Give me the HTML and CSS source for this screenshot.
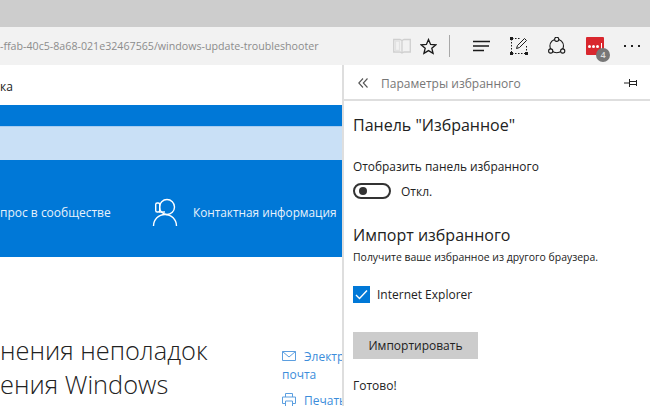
FILE: index.html
```html
<!DOCTYPE html>
<html lang="ru">
<head>
<meta charset="utf-8">
<title>Параметры избранного</title>
<link rel="stylesheet" href="styles.css">
</head>
<body>
<div class="titlebar"></div>
<header class="toolbar">
  <div class="url">-ffab-40c5-8a68-021e32467565/windows-update-troubleshooter</div>
  <div class="tools">
    <svg class="ic-book" width="18" height="16" viewBox="0 0 18 16" fill="none" stroke="#cfcfcf" stroke-width="1.300"><path d="M.7 1.500h6.300l2 1 2-1h6.300v12.500h-6.300l-2 1-2-1H.7zM9 2.500v12"/><path d="M2.500 3h4v9.500h-4z" stroke="#e2e2e2"/></svg>
    <svg class="ic-star" width="17" height="17" viewBox="0 0 17 17" fill="none" stroke="#1a1a1a" stroke-width="1.300"><path d="M8.500 1.500l2.100 4.900 5.300.4-4.100 3.400 1.300 5.200-4.600-2.800-4.600 2.800 1.300-5.200L1.100 6.800l5.300-.4z"/></svg>
    <span class="sep"></span>
    <svg class="ic-hub" width="18" height="12" viewBox="0 0 18 12" stroke="#1a1a1a" stroke-width="1.300"><path d="M0 1.500h17M0 6h16M0 10.500h11"/></svg>
    <svg class="ic-note" width="18" height="18" viewBox="0 0 18 18" fill="none" stroke="#1a1a1a"><path d="M2 1.500h8M2 16.500h14M1.500 2v14M16.500 9v7" stroke-dasharray="1.500 1.500"/><path d="M6.500 11.500l1-3 7-7 2 2-7 7z"/><g fill="#1a1a1a" stroke="none"><rect x="0" y="0" width="3" height="3"/><rect x="0" y="15" width="3" height="3"/><rect x="15" y="15" width="3" height="3"/></g></svg>
    <svg class="ic-share" width="20" height="18" viewBox="0 0 20 18" fill="none" stroke="#1a1a1a" stroke-width="1.100"><circle cx="9.700" cy="9" r="6.800"/><g fill="#f2f2f2"><circle cx="9.700" cy="2.300" r="2.100"/><circle cx="3.700" cy="14" r="2.100"/><circle cx="15.700" cy="14" r="2.100"/></g></svg>
    <div class="ext">
      <span class="lastpass"><i></i><i></i><i></i><b></b></span>
      <span class="badge">4</span>
    </div>
    <div class="more"><i></i><i></i><i></i></div>
  </div>
</header>
<div class="main">
  <section class="page">
    <div class="crumb">ка</div>
    <div class="hero">
      <div class="hero-top"></div>
      <div class="search"></div>
      <div class="hero-links">
        <span class="ask">прос в сообществе</span>
        <svg class="ic-agent" width="27" height="29" viewBox="0 0 27 29" fill="none" stroke="#fff" stroke-width="1.400"><circle cx="15" cy="9" r="7.500"/><path d="M1.500 28a11.500 11.500 0 0 1 23 0"/><rect x="3.700" y="5" width="4" height="9" rx="1.500" fill="#0078d7"/><path d="M7 14h6"/></svg>
        <span class="contact">Контактная информация</span>
      </div>
    </div>
    <div class="article">
      <h1 class="title">нения неполадок<br>ения Windows</h1>
      <aside class="share-links">
        <div class="link-row"><svg class="link-ic" width="14" height="10" viewBox="0 0 14 10" fill="none" stroke="#5c9fe0"><path d="M.5.500h13v9H.5zM.5.500L7 6l6.500-5.500"/></svg><span>Электронная</span></div>
        <div class="link-cont">почта</div>
        <div class="link-row"><svg class="link-ic" width="14" height="14" viewBox="0 0 14 14" fill="none" stroke="#5c9fe0"><path d="M3.500 4V.5h7V4M3.500 10.500H.5V4h13v6.500h-3M3.500 8h7v5.500h-7z"/></svg><span>Печать</span></div>
      </aside>
    </div>
  </section>
  <aside class="panel">
    <div class="panel-head">
      <svg class="chev" width="10" height="10" viewBox="0 0 10 10" fill="none" stroke="#555" stroke-width="1.100"><path d="M5 .5L.8 5 5 9.500M9.500.5L5.300 5l4.200 4.500"/></svg>
      <span class="panel-title">Параметры избранного</span>
      <svg class="ic-pin" width="14" height="10" viewBox="0 0 14 10" fill="none" stroke="#222"><path d="M0 5h5M5.500 1v8M5.500 3.500h7M5.500 6.500h7M12.500 2v6"/></svg>
    </div>
    <div class="panel-body">
      <h2 class="h-fav">Панель "Избранное"</h2>
      <div class="label">Отобразить панель избранного</div>
      <div class="toggle-row"><span class="toggle"><i></i></span><span>Откл.</span></div>
      <h2 class="h-import">Импорт избранного</h2>
      <div class="hint">Получите ваше избранное из другого браузера.</div>
      <div class="check-row">
        <svg class="check" width="17" height="17" viewBox="0 0 17 17"><rect width="17" height="17" fill="#0078d7"/><path d="M3 9l3.500 3.500L14 4.500" fill="none" stroke="#fff" stroke-width="1.400"/></svg>
        <span>Internet Explorer</span>
      </div>
      <div class="btn">Импортировать</div>
      <div class="done">Готово!</div>
    </div>
  </aside>
</div>
</body>
</html>
```
FILE: styles.css
```css
* { box-sizing: border-box; }
html, body { margin: 0; height: 100%; overflow: hidden; }
body { width: 650px; height: 406px; background: #fff; font-family: "Open Sans", "Noto Sans", sans-serif; color: #222; display: flex; flex-direction: column; }
.titlebar { height: 27px; background: #cdcdcd; flex: none; }
.toolbar { height: 38px; flex: none; background: #f2f2f2; display: flex; align-items: center; justify-content: space-between; overflow: hidden; }
.url { font-size: 10.67px; color: #8c8c8c; white-space: nowrap; }
.tools { display: flex; align-items: center; padding-right: 10px; }
.tools svg { flex: none; }
.ic-book { margin-right: 9px; }
.ic-star { margin-right: 12px; }
.sep { width: 1px; height: 22px; background: #a8a8a8; margin-right: 23px; }
.ic-hub { margin-right: 19px; }
.ic-note { margin-right: 19px; }
.ic-share { margin-right: 19px; }
.ext { position: relative; width: 18px; height: 18px; margin-right: 20px; }
.lastpass { width: 18px; height: 18px; background: #d9272e; border-radius: 1px; display: flex; align-items: center; justify-content: center; gap: 1px; }
.lastpass i { width: 3px; height: 3px; border-radius: 50%; background: #fff; }
.lastpass b { width: 1px; height: 7px; background: #fff; margin-left: 1px; }
.badge { position: absolute; left: 10px; top: 11px; width: 14px; height: 14px; border-radius: 50%; background: #777; color: #ddd; font-size: 9px; line-height: 14px; text-align: center; font-weight: 600; }
.more { display: flex; gap: 5px; }
.more i { width: 2px; height: 2px; background: #222; }
.main { flex: 1; display: flex; min-height: 0; }
.page { width: 342px; flex: none; overflow: hidden; }
.crumb { height: 40px; font-size: 12px; line-height: 44px; }
.hero { background: #0078d7; height: 152px; }
.hero-top { height: 21px; }
.search { height: 34px; background: #c9e0f6; border-top: 1px solid #a9cdf0; }
.hero-links { height: 97px; display: flex; align-items: center; color: #e8f2fb; font-size: 11.8px; padding-top: 7px; white-space: nowrap; }
.ask { width: 152px; flex: none; font-size: 12px; }
.ic-agent { margin-right: 14px; flex: none; }
.article { display: flex; justify-content: space-between; padding-top: 76px; }
.title { margin: 0; font-weight: 300; font-family: "Open Sans", sans-serif; font-size: 25.4px; line-height: 34px; color: #222; white-space: nowrap; }
.share-links { width: 60px; flex: none; font-size: 12px; color: #3c8ddb; white-space: nowrap; padding-top: 14px; overflow: hidden; }
.link-row { display: flex; align-items: center; gap: 8px; height: 18px; }
.link-ic { flex: none; }
.link-cont { height: 26px; line-height: 20px; }
.panel { width: 308px; flex: none; border-left: 2px solid #dedede; display: flex; flex-direction: column; }
.panel-head { height: 36px; flex: none; border-bottom: 2px solid #dedede; display: flex; align-items: center; padding: 2px 12px 0 14px; color: #777; font-size: 12px; }
.chev { margin-right: 13px; flex: none; }
.panel-title { flex: 1; }
.panel-body { padding: 0 9px; }
h2 { margin: 0; font-weight: 400; font-size: 16px; color: #222; }
.h-fav { margin-top: 13px; line-height: 22px; }
.label { margin-top: 22px; font-size: 11.9px; line-height: 16px; }
.toggle-row { margin-top: 9px; display: flex; align-items: center; gap: 10px; font-size: 12px; height: 16px; }
.toggle { width: 38px; height: 16px; border: 2px solid #333; border-radius: 8px; display: flex; align-items: center; padding-left: 4px; }
.toggle i { width: 8px; height: 8px; border-radius: 50%; background: #333; }
.h-import { margin-top: 25px; line-height: 22px; }
.hint { margin-top: 3px; font-size: 10.45px; line-height: 16px; }
.check-row { margin-top: 21px; display: flex; align-items: center; gap: 7px; font-size: 12px; height: 17px; }
.btn { margin-top: 29px; width: 125px; height: 27px; background: #cccccc; font-size: 12px; line-height: 27px; text-align: center; }
.done { margin-top: 19px; font-size: 12px; line-height: 16px; }
```
